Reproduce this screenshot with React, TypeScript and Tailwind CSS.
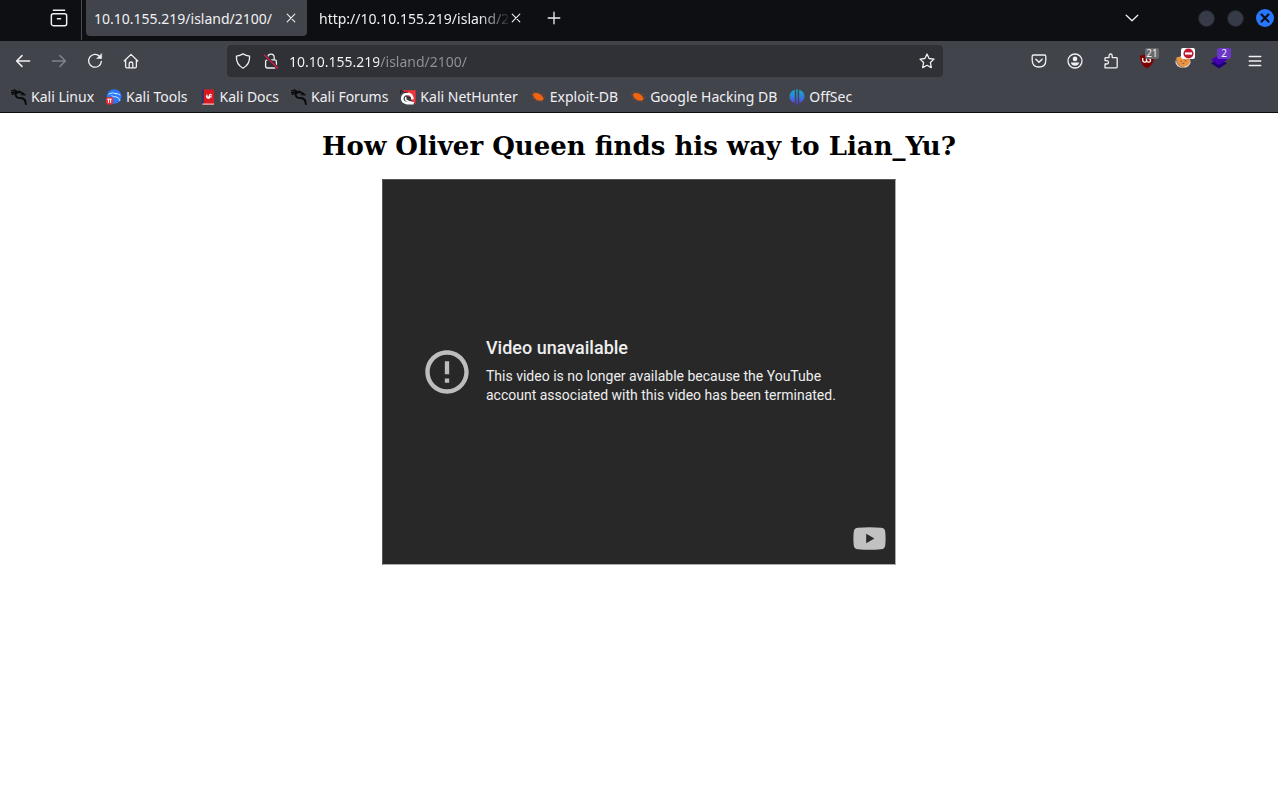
import React from "react"

type IconProps = { className?: string; children: React.ReactNode }

function Icon({ className = "size-4", children }: IconProps) {
  return (
    <svg viewBox="0 0 16 16" className={className} fill="none" stroke="currentColor" strokeWidth="1.3" strokeLinecap="round" strokeLinejoin="round" aria-hidden="true">
      {children}
    </svg>
  )
}

function ToolButton({ label, className = "", children }: { label: string; className?: string; children: React.ReactNode }) {
  return (
    <button type="button" aria-label={label} className={`relative flex h-8 w-9 shrink-0 items-center justify-center ${className}`}>
      {children}
    </button>
  )
}

function CloseIcon() {
  return (
    <Icon>
      <path d="M4.2 4.2l7.6 7.6M11.8 4.2l-7.6 7.6" strokeWidth="1.1" />
    </Icon>
  )
}

function DragonIcon() {
  return (
    <svg viewBox="0 0 16 16" className="size-4" fill="none" stroke="#0b0b0d" strokeLinecap="round" aria-hidden="true">
      <path d="M.5 1.6L4.4 2.2L8.6 2.4L12.4 4.6" strokeWidth="1.2" />
      <path d="M.5 3.9Q4 3 6.6 3.7Q4.2 4.6 4.9 7Q6.3 9.4 10 9Q14.3 9.4 14.9 15.2" strokeWidth="1.8" />
      <path d="M1.4 5.6L5 4.2M6.6 3.6Q10.4 2.7 14.6 6.1Q12.4 5.3 10.2 5.8M3.2.5L5.2 2M12.4 9.8L14.8 11.2" strokeWidth="1.1" />
    </svg>
  )
}

function ToolsIcon() {
  return (
    <svg viewBox="0 0 16 16" className="size-4" aria-hidden="true">
      <circle cx="8.2" cy="7.5" r="7.3" fill="#2777ff" />
      <path d="M2.6 5.2Q6.4 2.6 10.8 5M5.5 6.5Q7.4 8.2 10 7.8Q13 8 14 12M8.4 4.5Q12 4 14.3 6.2" fill="none" stroke="#d7e7ff" strokeWidth="1" />
      <rect y="8" width="7.2" height="7.5" rx="2.8" fill="#e33239" />
      <path d="M1.3 10.2h4.4M2.5 10.2v3.6M4.6 10.2v3.6" stroke="#fff" strokeWidth="1" />
    </svg>
  )
}

function DocsIcon() {
  return (
    <svg viewBox="0 0 16 16" className="size-4" aria-hidden="true">
      <path d="M2 .4h12v15.2H2z" fill="#d71920" />
      <path d="M1.8.4h2v14.8h-2z" fill="#28346f" />
      <path d="M2.4 14.5H14v1.2H2.4z" fill="#e8c7c9" />
      <path d="M11.6 6.4Q10.4 4.4 9.5 6.3Q9.2 8.7 7.5 8.2Q6.2 7.2 7.2 5.6M6.2 7.2Q8 10.6 9.5 8.6Q10 7 11.6 8.2" fill="none" stroke="#fff" strokeWidth="1.2" />
    </svg>
  )
}

function NetHunterIcon() {
  return (
    <svg viewBox="0 0 16 16" className="size-4" aria-hidden="true">
      <path d="M2 1.2H15.6V15.2L7.2 6.5z" fill="#f5333b" />
      <path d="M13.6 14.2H7.2Q1.9 13.2 2.2 9.4Q2.8 5.1 7.4 4.8Q12.2 5 12.6 10.4" fill="none" stroke="#fff" strokeWidth="2.6" />
      <path d="M6.2 8.1Q4.8 9.9 6.4 11.4Q8 12.7 13.8 13.8" fill="none" stroke="#fff" strokeWidth="1.5" />
      <path d="M6.8 8.5Q8.4 6.7 10.8 8.3Q11.4 10 10 10.6Q8.2 11 7.6 9.8z" fill="#33343a" />
      <path d="M.3 4.8L1 1.3L4.3 3.4L7.8 3.2" fill="none" stroke="#171719" strokeWidth=".9" />
    </svg>
  )
}

function ExploitIcon() {
  return (
    <svg viewBox="0 0 16 16" className="size-4" aria-hidden="true">
      <path d="M2.6 6.1Q3.2 3.6 6.1 3.7L8.8 4.4Q11.5 5.5 12.6 7.6L13.8 10.3L11.5 11.7Q8.3 12.1 5.7 10.2Q3.5 8.7 2.6 6.1z" fill="#f0640f" />
      <path d="M3.7 7L.4 5M5.5 4.3L2.6 2M8.8 4.8L9 2.3M10.7 6.2L14.3 4.8M12.5 8.1L15.7 8.3M5.2 9.5L1.7 9.8M7.1 10.9L5.4 13.2M10.6 11.4L12.4 13.8" stroke="#8f4c2a" strokeWidth=".7" />
    </svg>
  )
}

function OffSecIcon() {
  return (
    <svg viewBox="0 0 16 16" className="size-4" aria-hidden="true">
      <defs>
        <linearGradient id="offsec" gradientUnits="userSpaceOnUse" x1="0" y1="0" x2="0" y2="16">
          <stop offset="0" stopColor="#10b4c8" />
          <stop offset=".55" stopColor="#3478de" />
          <stop offset="1" stopColor="#6a2be0" />
        </linearGradient>
      </defs>
      <path d="M5.8.7V13.9Q.6 12.3.5 7.2Q.7 2.4 5.8.7zM7.3.3h1.4v15.4H7.3zM10.2.7Q15.3 2.4 15.5 7.2Q15.3 12.3 10.2 13.9z" fill="url(#offsec)" />
    </svg>
  )
}

const bookmarks = [
  { name: "Kali Linux", icon: <DragonIcon /> },
  { name: "Kali Tools", icon: <ToolsIcon /> },
  { name: "Kali Docs", icon: <DocsIcon /> },
  { name: "Kali Forums", icon: <DragonIcon /> },
  { name: "Kali NetHunter", icon: <NetHunterIcon /> },
  { name: "Exploit-DB", icon: <ExploitIcon /> },
  { name: "Google Hacking DB", icon: <ExploitIcon /> },
  { name: "OffSec", icon: <OffSecIcon /> },
]

function TabStrip() {
  return (
    <div className="flex h-[41px] items-start bg-[#0e0f13]">
      <button type="button" aria-label="Firefox View" className="ml-10 flex h-9 w-[38px] items-center justify-center">
        <Icon className="size-[18px]">
          <rect x="1.2" y="4.2" width="13.6" height="10.6" rx="1.8" />
          <path d="M3 1.2h10M6.6 8.6h2.8" />
        </Icon>
      </button>
      <div className="ml-[3px] h-10 w-px bg-[#4c4d54]" />
      <div className="ml-1 flex h-9 w-[221px] items-center rounded-b bg-[#42444c] px-2">
        <span className="flex-1 truncate">10.10.155.219/island/2100/</span>
        <button type="button" aria-label="Close tab"><CloseIcon /></button>
      </div>
      <div className="flex h-9 w-[225px] items-center pr-2 pl-3">
        <span className="flex-1 overflow-hidden whitespace-nowrap mask-r-from-[160px] mask-r-to-[192px]">http://10.10.155.219/island/2100/</span>
        <button type="button" aria-label="Close tab"><CloseIcon /></button>
      </div>
      <ToolButton label="New tab" className="ml-1 mt-[2px]">
        <Icon><path d="M8 2.2v11.6M2.2 8h11.6" /></Icon>
      </ToolButton>
      <div className="ml-auto flex h-9 items-center">
        <ToolButton label="List all tabs">
          <Icon><path d="M2.2 5.3L8 10.8L13.8 5.3" /></Icon>
        </ToolButton>
        <div className="ml-12 flex items-center gap-3 pr-1">
          <button type="button" aria-label="Minimize" className="size-[17px] rounded-full border border-[#20232b] bg-[#363b47]" />
          <button type="button" aria-label="Maximize" className="size-[17px] rounded-full border border-[#20232b] bg-[#363b47]" />
          <button type="button" aria-label="Close window" className="flex size-[18px] items-center justify-center rounded-full bg-[#2777ff] text-[#0e1118]">
            <Icon className="size-3"><path d="M3.4 3.4l9.2 9.2M12.6 3.4l-9.2 9.2" strokeWidth="3" /></Icon>
          </button>
        </div>
      </div>
    </div>
  )
}

function NavBar() {
  return (
    <div className="flex h-10 items-center px-[5px]">
      <ToolButton label="Back">
        <Icon><path d="M14.6 8H1.6M7 2.6L1.6 8L7 13.4" strokeWidth="1.5" /></Icon>
      </ToolButton>
      <ToolButton label="Forward" className="text-[#818289]">
        <Icon><path d="M1.4 8H14.4M9 2.6L14.4 8L9 13.4" strokeWidth="1.5" /></Icon>
      </ToolButton>
      <ToolButton label="Reload">
        <Icon>
          <path d="M12.8 3.5A6.4 6.4 0 1 0 14.4 8.4" />
          <path d="M14.6.9V5.5H10z" fill="currentColor" strokeWidth=".6" />
        </Icon>
      </ToolButton>
      <ToolButton label="Home">
        <Icon>
          <path d="M1.2 8L8 1.4L14.8 8M2.6 7V13.6Q2.6 14.8 3.8 14.8H12.2Q13.4 14.8 13.4 13.6V7M6.2 14.5V10.5Q6.2 9 8 9Q9.8 9 9.8 10.5V14.5" />
        </Icon>
      </ToolButton>
      <div className="mx-[78px] flex h-8 flex-1 items-center rounded bg-[#303136]">
        <button type="button" aria-label="Tracking protection" className="ml-2">
          <Icon><path d="M8 .9Q11 2.6 14.6 3.2Q15 11.2 8 15.2Q1 11.2 1.4 3.2Q5 2.6 8 .9z" /></Icon>
        </button>
        <button type="button" aria-label="Connection not secure" className="ml-3">
          <Icon>
            <path d="M4.8 6.8V4.4A3.2 3.2 0 0 1 11.2 4.4V6.8M4.4 6.9H11.6Q13.4 6.9 13.4 8.6V13.3Q13.4 15 11.6 15H4.4Q2.6 15 2.6 13.3V8.6Q2.6 6.9 4.4 6.9z" />
            <path d="M1.3 1.9L14.6 15" stroke="#303136" strokeWidth="3" />
            <path d="M1.3 1.9L14.6 15" stroke="#e8194a" strokeWidth="1.2" />
          </Icon>
        </button>
        <input
          aria-label="Address"
          defaultValue="10.10.155.219/island/2100/"
          className="ml-[10px] min-w-0 flex-1 bg-[linear-gradient(90deg,#fbfbfe_90px,#929399_90px)] bg-clip-text text-transparent outline-none"
        />
        <button type="button" aria-label="Bookmark this page" className="mr-2">
          <Icon><path d="M8 1L10.1 5.5L15 6.1L11.4 9.5L12.3 14.6L8 12.3L3.7 14.6L4.6 9.5L1 6.1L5.9 5.5z" /></Icon>
        </button>
      </div>
      <ToolButton label="Save to Pocket">
        <Icon>
          <path d="M2.4 2H13.6Q14.8 2 14.8 3.3V7.2Q14.8 14 8 14Q1.2 14 1.2 7.2V3.3Q1.2 2 2.4 2z" />
          <path d="M4.9 6.3L8 9.2L11.1 6.3" strokeWidth="1.5" />
        </Icon>
      </ToolButton>
      <ToolButton label="Account">
        <Icon>
          <circle cx="8" cy="8" r="7" />
          <circle cx="8" cy="5.9" r="2.3" fill="currentColor" stroke="none" />
          <path d="M3.8 9.5H12.2Q11.3 12.8 8 12.8Q4.7 12.8 3.8 9.5z" fill="currentColor" stroke="none" />
        </Icon>
      </ToolButton>
      <ToolButton label="Extensions">
        <Icon>
          <path d="M2 14.8V11H3.8Q5.5 10.8 5.5 9.3Q5.5 7.8 3.8 7.6H2V5.4Q2 4.6 2.8 4.6H6V2.8Q6.2 1 7.6 1Q9 1 9.2 2.8V4.6H13.4Q14.2 4.6 14.2 5.4V14Q14.2 14.8 13.4 14.8z" />
        </Icon>
      </ToolButton>
      <ToolButton label="uBlock Origin">
        <svg viewBox="0 0 16 16" className="size-4" aria-hidden="true">
          <path d="M8 .4Q11 2.2 14.9 2.6Q15.6 11.6 8 15.6Q.4 11.6 1.1 2.6Q5 2.2 8 .4z" fill="#800000" />
          <path d="M3.7 5V7.4Q3.8 9.2 5.6 9.2Q7.5 9.2 7.5 7.4V5M7.5 7.4Q7.7 9.2 9.6 9.2Q11.6 9.1 11.5 7.2Q11.3 5.5 9.5 5.5" fill="none" stroke="#fff" strokeWidth="1.3" />
        </svg>
        <span className="absolute top-[3px] right-[6px] w-[14px] rounded-xs bg-[#696a6b] text-center text-[10px] leading-[11px]">21</span>
      </ToolButton>
      <ToolButton label="FoxyProxy">
        <svg viewBox="0 0 16 16" className="size-4" aria-hidden="true">
          <ellipse cx="8" cy="9" rx="7.6" ry="6" fill="#d8d3cd" />
          <path d="M1.2 4.5L4.8 4L12.4 3.2L15 7.8Q14.5 13.2 8.3 13.7Q3.4 13 2.3 8.7z" fill="#ee933f" />
          <path d="M.8 5.4L2.4 10Q4.8 14.5 9.5 14.4M5 8.8L7 8M9.3 7.7L11.6 8M7 10.6L9.4 10.3" fill="none" stroke="#7f5b3e" strokeWidth=".8" />
        </svg>
        <span className="absolute top-[3px] right-[6px] flex h-[11px] w-[14px] items-center justify-center rounded-xs bg-white">
          <svg viewBox="0 0 12 12" className="size-[11px]" aria-hidden="true">
            <circle cx="6" cy="6" r="5.5" fill="#be1931" />
            <path d="M2.2 4.8h7.6v2.4H2.2z" fill="#fff" />
          </svg>
        </span>
      </ToolButton>
      <ToolButton label="Wappalyzer">
        <svg viewBox="0 0 16 16" className="size-4" aria-hidden="true">
          <path d="M0 10.3L8 5.7L16 10.3L8 15.6z" fill="#200074" />
          <path d="M0 6.8L8 2L16 6.8L8 12z" fill="#4500b4" />
        </svg>
        <span className="absolute top-[3px] right-[6px] w-[14px] rounded-xs bg-[#6938c6] text-center text-[10px] leading-[11px]">2</span>
      </ToolButton>
      <ToolButton label="Open menu">
        <Icon><path d="M2.2 3.5h11.6M2.2 8h11.6M2.2 12.5h11.6" /></Icon>
      </ToolButton>
    </div>
  )
}

function BookmarksBar() {
  return (
    <nav className="flex h-[31px] items-center gap-3 px-[11px]">
      {bookmarks.map(({ name, icon }) => (
        <a key={name} href="#" className="flex items-center gap-1 whitespace-nowrap">
          {icon}
          {name}
        </a>
      ))}
    </nav>
  )
}

export default function App() {
  return (
    <div className="min-h-screen bg-white">
      <header className="border-b border-[#0c0c0d] bg-[#42444c] font-['Noto_Sans',sans-serif] text-[14px] text-[#f0f0f3]">
        <TabStrip />
        <NavBar />
        <BookmarksBar />
      </header>
      <main className="flex flex-col items-center px-2 pt-[18px]">
        <h1 className="text-center font-['DejaVu_Serif',serif] text-[26px] leading-[30px] font-bold text-black">How Oliver Queen finds his way to Lian_Yu?</h1>
        <section aria-label="Video player" className="relative mt-[18px] flex h-[386px] w-full max-w-[514px] items-center border border-t-[#555] border-r-[#aaa] border-b-[#aaa] border-l-[#555] bg-[#282828] pl-[38px] font-['Roboto',sans-serif] text-[#eee]">
          <svg viewBox="0 0 24 24" className="size-[52px] shrink-0" fill="#bdbdbd" aria-hidden="true">
            <path d="M11 15h2v2h-2zm0-8h2v6h-2zm.99-5C6.47 2 2 6.48 2 12s4.47 10 9.99 10C17.52 22 22 17.52 22 12S17.52 2 11.99 2zM12 20c-4.42 0-8-3.58-8-8s3.58-8 8-8 8 3.58 8 8-3.58 8-8 8z" />
          </svg>
          <div className="ml-[13px] pb-[3px]">
            <h2 className="text-[18px] leading-6 font-medium">Video unavailable</h2>
            <p className="mt-[7px] max-w-[370px] text-[14px] leading-[19px]">This video is no longer available because the YouTube account associated with this video has been terminated.</p>
          </div>
          <a href="#" aria-label="Watch on YouTube" className="absolute right-[9px] bottom-[14px]">
            <svg viewBox="0 0 33 23" className="h-[23px] w-[33px]" aria-hidden="true">
              <path d="M5 .8Q16.5-.3 28 .8Q31.8 1 32.2 4.5Q33 11.5 32.2 18.5Q31.8 22 28 22.2Q16.5 23.3 5 22.2Q1.2 22 .8 18.5Q0 11.5.8 4.5Q1.2 1 5 .8z" fill="#c1c1c1" />
              <path d="M13.2 6.8V16.2L21.4 11.5z" fill="#282828" />
            </svg>
          </a>
        </section>
      </main>
    </div>
  )
}
